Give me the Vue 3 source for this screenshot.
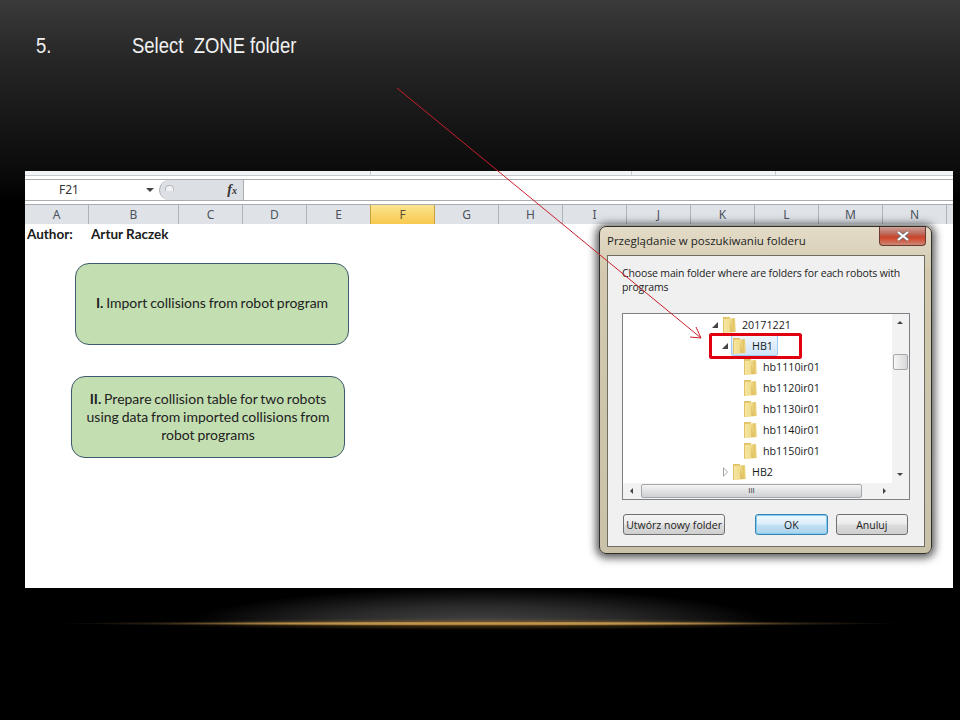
<template>
  <div class="slide">
    <header class="title">
      <span class="num">5.</span>
      <span class="caption">Select&nbsp; ZONE folder</span>
    </header>

    <section class="sheet">
      <div class="ribbon-edge">
        <i style="width: 345px"></i><i style="width: 260px"></i><i style="width: 143px"></i>
      </div>
      <div class="formula-bar">
        <div class="name-box">
          <span>F21</span>
          <b class="caret"></b>
        </div>
        <div class="fx-box">
          <span class="knob"></span>
          <em>f<small>x</small></em>
        </div>
        <div class="formula-input"></div>
      </div>
      <div class="columns">
        <div
          v-for="col in columns"
          :key="col.name"
          class="col"
          :class="{ active: col.name === 'F' }"
          :style="{ width: col.width + 'px' }"
        >{{ col.name }}</div>
        <div class="col-rest"></div>
      </div>
      <div class="author">
        <b>Author:</b>
        <b>Artur Raczek</b>
      </div>

      <div class="shape shape-one"><p><b>I.</b> Import collisions from robot program</p></div>
      <div class="shape shape-two"><p><b>II.</b> Prepare collision table for two robots using data from imported collisions from robot programs</p></div>

      <div class="dialog">
        <div class="dialog-title">
          <span>Przeglądanie w poszukiwaniu folderu</span>
          <button class="close-btn">
            <svg viewBox="0 0 14 10" width="14" height="10">
              <path d="M2 1 L12 9 M12 1 L2 9" stroke="#6b6f78" stroke-width="3.6" fill="none"/>
              <path d="M2 1 L12 9 M12 1 L2 9" stroke="#fff" stroke-width="2.2" fill="none"/>
            </svg>
          </button>
        </div>
        <div class="dialog-body">
          <p class="prompt">Choose main folder where are folders for each robots with programs</p>
          <div class="tree-box">
            <div class="tree-main">
              <ul class="tree">
                <li v-for="row in rows" :key="row.name" :style="{ paddingLeft: row.indent + 'px' }">
                  <span class="twist" :class="row.twist"></span>
                  <div class="tree-item" :class="{ selected: row.selected }">
                    <svg class="folder" viewBox="0 0 14 18" width="14" height="18">
                      <defs>
                        <linearGradient id="fold" x1="0" y1="0" x2="1" y2="0">
                          <stop offset="0" stop-color="#f5e6a2"/>
                          <stop offset="0.5" stop-color="#f1dc8c"/>
                          <stop offset="0.8" stop-color="#e4c566"/>
                          <stop offset="1" stop-color="#f3e19c"/>
                        </linearGradient>
                      </defs>
                      <path d="M1 1 L8 1 L8 16 L1 17 Z" fill="#e3c267"/>
                      <path d="M2 3 L13 2 L14 16 L2 17 Z" fill="url(#fold)"/>
                      <path d="M8 5 L11 16 L8 16 Z" fill="#d2ac50" opacity="0.45"/>
                    </svg>
                    <span class="label">{{ row.name }}</span>
                  </div>
                </li>
              </ul>
              <div class="vscroll">
                <b class="tri up"></b>
                <span class="thumb"></span>
                <b class="tri down"></b>
              </div>
            </div>
            <div class="hscroll">
              <b class="tri left"></b>
              <span class="hthumb">III</span>
              <b class="tri right"></b>
            </div>
          </div>
          <div class="dialog-actions">
            <button class="btn new-folder">Utwórz nowy folder</button>
            <button class="btn ok">OK</button>
            <button class="btn cancel">Anuluj</button>
          </div>
        </div>
      </div>
    </section>

    <div class="glow"></div>

    <svg class="arrow" viewBox="0 0 960 720" width="960" height="720">
      <path d="M397 88 L701 338 M690 337 L701 338 L696 327" fill="none" stroke="#c8202c" stroke-width="1"/>
      <rect x="710.5" y="334.5" width="90" height="23" rx="1" fill="none" stroke="#e0000f" stroke-width="3"/>
    </svg>
  </div>
</template>

<script setup>
const columns = [
  { name: 'A', width: 64 },
  { name: 'B', width: 90 },
  { name: 'C', width: 64 },
  { name: 'D', width: 64 },
  { name: 'E', width: 64 },
  { name: 'F', width: 64 },
  { name: 'G', width: 64 },
  { name: 'H', width: 64 },
  { name: 'I', width: 64 },
  { name: 'J', width: 64 },
  { name: 'K', width: 64 },
  { name: 'L', width: 64 },
  { name: 'M', width: 64 },
  { name: 'N', width: 64 }
]

const rows = [
  { name: '20171221', indent: 88, twist: 'open' },
  { name: 'HB1', indent: 98, twist: 'open', selected: true },
  { name: 'hb1110ir01', indent: 109 },
  { name: 'hb1120ir01', indent: 109 },
  { name: 'hb1130ir01', indent: 109 },
  { name: 'hb1140ir01', indent: 109 },
  { name: 'hb1150ir01', indent: 109 },
  { name: 'HB2', indent: 98, twist: 'closed' }
]
</script>

<style>
html, body {
  margin: 0;
  background: #000;
}
</style>

<style scoped>
.slide {
  position: relative;
  width: 960px;
  height: 720px;
  overflow: hidden;
  display: flex;
  flex-direction: column;
  background: linear-gradient(180deg, #3a3a3a 0%, #262626 60px, #141414 130px, #0b0b0b 171px, #000 200px);
  font-family: "Open Sans", "Noto Sans", sans-serif;
}

.title {
  display: flex;
  height: 171px;
  box-sizing: border-box;
  padding: 33px 0 0 36px;
  color: #f2f2f2;
  font-family: "Liberation Sans", Arial, sans-serif;
  font-size: 22px;
  line-height: 26px;
}

.num {
  width: 96px;
  transform: scaleX(0.84);
  transform-origin: left;
}

.caption {
  white-space: nowrap;
  transform: scaleX(0.84);
  transform-origin: left;
}

.sheet {
  position: relative;
  width: 928px;
  height: 417px;
  margin-left: 25px;
  background: #fff;
  flex-shrink: 0;
}

.ribbon-edge {
  display: flex;
  height: 4px;
  padding-left: 0;
  border-bottom: 1px solid #c6c9cd;
  background: #f3f4f6;
}

.ribbon-edge i {
  display: block;
  border-right: 1px solid #c6c9cd;
}

.formula-bar {
  display: flex;
  height: 20px;
  margin-top: 3px;
  border-top: 1px solid #a9adb2;
  border-bottom: 1px solid #a9adb2;
}

.name-box {
  width: 134px;
  display: flex;
  align-items: center;
  box-sizing: border-box;
  padding: 0 0 2px 34px;
  font-family: "Noto Sans", sans-serif;
  font-size: 12px;
  color: #333;
}

.name-box span {
  flex: 1;
}

.caret {
  width: 0;
  height: 0;
  margin: 2px 5px 0 0;
  border-left: 4px solid transparent;
  border-right: 4px solid transparent;
  border-top: 4px solid #444;
}

.fx-box {
  position: relative;
  width: 85px;
  box-sizing: border-box;
  background: #dcdfe4;
  border-radius: 10px 0 0 10px;
  border-left: 1px solid #a9adb2;
  border-right: 1px solid #a9adb2;
  display: flex;
  align-items: center;
  justify-content: flex-end;
  padding-right: 6px;
}

.knob {
  position: absolute;
  left: 5px;
  top: 5px;
  width: 7px;
  height: 5px;
  border-radius: 4px 4px 0 0;
  background: #f0f1f3;
  border: 1px solid #b7bbc1;
  border-bottom: none;
}

.fx-box em {
  font-family: "Liberation Serif", serif;
  font-size: 14px;
  font-weight: bold;
  color: #333;
}

.fx-box small {
  font-size: 10px;
}

.formula-input {
  flex: 1;
  background: #fff;
}

.columns {
  display: flex;
  height: 20px;
  margin-top: 3px;
  border-top: 1px solid #a9adb2;
  background: #dfe3e8;
  box-sizing: border-box;
}

.col {
  box-sizing: border-box;
  border-right: 1px solid #aeb3b9;
  text-align: center;
  font-family: "Noto Sans", sans-serif;
  font-size: 12px;
  line-height: 19px;
  color: #4c535c;
  flex-shrink: 0;
}

.col.active {
  margin-left: -1px;
  width: 65px !important;
  background: linear-gradient(180deg, #fbe48f, #f7c94f);
  border-left: 1px solid #c9a23a;
  border-right: 1px solid #c9a23a;
  color: #5c5030;
}

.col-rest {
  flex: 1;
}

.author {
  display: flex;
  padding-left: 2px;
  font-family: Lato, "Open Sans", sans-serif;
  font-size: 13.5px;
  line-height: 20px;
  color: #1a1a1a;
}

.author b:first-child {
  width: 64px;
}

.shape {
  position: absolute;
  box-sizing: border-box;
  display: flex;
  align-items: center;
  justify-content: center;
  text-align: center;
  background: #c3deb1;
  border: 1px solid #3d5a6e;
  border-radius: 14px;
  font-family: Lato, "Open Sans", sans-serif;
  font-size: 14px;
  word-spacing: -0.8px;
  line-height: 18px;
  color: #222;
}

.shape p {
  margin: 0;
}

.shape-one {
  left: 50px;
  top: 92px;
  width: 274px;
  height: 82px;
  padding-bottom: 2px;
}

.shape-two {
  left: 46px;
  top: 205px;
  width: 274px;
  height: 82px;
  padding: 0 12px;
}

.dialog {
  position: absolute;
  left: 574px;
  top: 55px;
  width: 333px;
  height: 328px;
  box-sizing: border-box;
  padding: 0 6px 6px 7px;
  display: flex;
  flex-direction: column;
  border: 1px solid #2f2e28;
  border-radius: 7px;
  background: linear-gradient(180deg, #e4dcc8 0%, #d2c9ae 14%, #c9c2a9 100%);
  box-shadow: 0 1px 8px 3px rgba(0, 0, 0, 0.65);
}

.dialog-title {
  position: relative;
  height: 28px;
  flex-shrink: 0;
  font-size: 11.5px;
  line-height: 28px;
  color: #1d1d1d;
}

.close-btn {
  position: absolute;
  right: -1px;
  top: 0;
  width: 47px;
  height: 19px;
  padding: 0;
  border: 1px solid #6d3b2e;
  border-top: none;
  border-radius: 0 0 4px 4px;
  background: linear-gradient(180deg, #d0a096 0%, #bd6d5f 35%, #c8452c 55%, #d2543a 70%, #c98a78 100%);
  display: flex;
  align-items: center;
  justify-content: center;
}

.dialog-body {
  flex: 1;
  display: flex;
  flex-direction: column;
  box-sizing: border-box;
  background: #f0f0f0;
  border: 1px solid #6f6d62;
  padding: 0 16px 0 14px;
}

.prompt {
  margin: 10px 0 0;
  height: 47px;
  font-size: 10.5px;
  letter-spacing: -0.14px;
  line-height: 14px;
  color: #222;
}

.tree-box {
  width: 288px;
  height: 187px;
  box-sizing: border-box;
  border: 1px solid #7d8186;
  background: #fff;
  display: flex;
  flex-direction: column;
}

.tree-main {
  flex: 1;
  display: flex;
  min-height: 0;
}

.tree {
  flex: 1;
  margin: 0;
  padding: 0;
  list-style: none;
}

.tree li {
  display: flex;
  align-items: center;
  height: 21px;
}

.twist {
  width: 10px;
  height: 10px;
  flex-shrink: 0;
  position: relative;
}

.twist.open::after {
  content: "";
  position: absolute;
  left: 1px;
  top: 2px;
  width: 0;
  height: 0;
  border-bottom: 6px solid #444;
  border-left: 6px solid transparent;
}

.twist.closed::before {
  content: "";
  position: absolute;
  left: 2px;
  top: 0;
  width: 0;
  height: 0;
  border-left: 5px solid #a6a6a6;
  border-top: 5px solid transparent;
  border-bottom: 5px solid transparent;
}

.twist.closed::after {
  content: "";
  position: absolute;
  left: 3px;
  top: 2px;
  width: 0;
  height: 0;
  border-left: 3px solid #fff;
  border-top: 3px solid transparent;
  border-bottom: 3px solid transparent;
}

.tree-item {
  display: flex;
  align-items: center;
  gap: 6px;
  height: 21px;
  padding: 0 4px 0 0;
  box-sizing: border-box;
  border: 1px solid transparent;
  border-radius: 2px;
}

.tree-item.selected {
  background: linear-gradient(180deg, #eef6fe, #cfe4fa);
  border-color: #9ecbf0;
}

.folder {
  flex-shrink: 0;
}

.label {
  font-size: 10.7px;
  color: #1a1a1a;
  white-space: nowrap;
}

.vscroll {
  width: 17px;
  background: #f2f2f2;
  position: relative;
  flex-shrink: 0;
}

.thumb {
  position: absolute;
  left: 1px;
  top: 40px;
  width: 13px;
  height: 14px;
  border: 1px solid #a4a7ab;
  border-radius: 2px;
  background: linear-gradient(90deg, #f6f6f6, #d8d8d8);
}

.tri {
  position: absolute;
  width: 0;
  height: 0;
}

.tri.up {
  left: 5px;
  top: 7px;
  border-left: 3px solid transparent;
  border-right: 3px solid transparent;
  border-bottom: 3px solid #444;
}

.tri.down {
  left: 5px;
  bottom: 7px;
  border-left: 3px solid transparent;
  border-right: 3px solid transparent;
  border-top: 3px solid #444;
}

.hscroll {
  position: relative;
  height: 16px;
  flex-shrink: 0;
  background: #f2f2f2;
  display: flex;
  justify-content: center;
}

.hthumb {
  position: absolute;
  left: 18px;
  top: 1px;
  width: 221px;
  height: 14px;
  box-sizing: border-box;
  border: 1px solid #a4a7ab;
  border-radius: 2px;
  background: linear-gradient(180deg, #f4f4f4, #cfd0d2);
  text-align: center;
  font-family: "Liberation Sans", sans-serif;
  font-size: 8px;
  line-height: 12px;
  color: #444;
}

.tri.left {
  left: 7px;
  top: 5px;
  border-top: 3px solid transparent;
  border-bottom: 3px solid transparent;
  border-right: 3px solid #444;
}

.tri.right {
  right: 23px;
  top: 5px;
  border-top: 3px solid transparent;
  border-bottom: 3px solid transparent;
  border-left: 3px solid #444;
}

.dialog-actions {
  display: flex;
  margin-top: 14px;
}

.btn {
  height: 21px;
  padding: 0;
  box-sizing: border-box;
  border: 1px solid #707070;
  border-radius: 3px;
  background: linear-gradient(180deg, #f4f4f4 0%, #ebebeb 48%, #dcdcdc 52%, #cfcfcf 100%);
  font-family: "Open Sans", "Noto Sans", sans-serif;
  font-size: 10.5px;
  color: #222;
}

.new-folder {
  width: 103px;
  margin-left: 1px;
}

.ok {
  width: 73px;
  margin-left: 30px;
  border-color: #3c7fb1;
  background: linear-gradient(180deg, #f0f8fd 0%, #dcedf8 48%, #c4e0f3 52%, #a9d2ec 100%);
  box-shadow: inset 0 0 0 1px #7fd0ee;
}

.cancel {
  width: 73px;
  margin-left: 8px;
}

.glow {
  flex: 1;
  position: relative;
  background: radial-gradient(ellipse 290px 36px at 480px 36px, #454545 0%, #2a2a2a 50%, rgba(0, 0, 0, 0) 100%);
  background-size: 100% 36px;
  background-repeat: no-repeat;
}

.glow::before {
  content: "";
  position: absolute;
  left: 60px;
  right: 60px;
  top: 33px;
  height: 5px;
  background: radial-gradient(ellipse closest-side, #f6cf7e 0%, #c09a55 45%, rgba(90, 70, 40, 0.5) 75%, rgba(0, 0, 0, 0) 100%);
}

.glow::after {
  content: "";
  position: absolute;
  left: 150px;
  right: 150px;
  top: 30px;
  height: 12px;
  background: radial-gradient(ellipse closest-side, rgba(150, 105, 40, 0.6), rgba(0, 0, 0, 0));
}

.arrow {
  position: absolute;
  left: 0;
  top: 0;
  pointer-events: none;
}
</style>
